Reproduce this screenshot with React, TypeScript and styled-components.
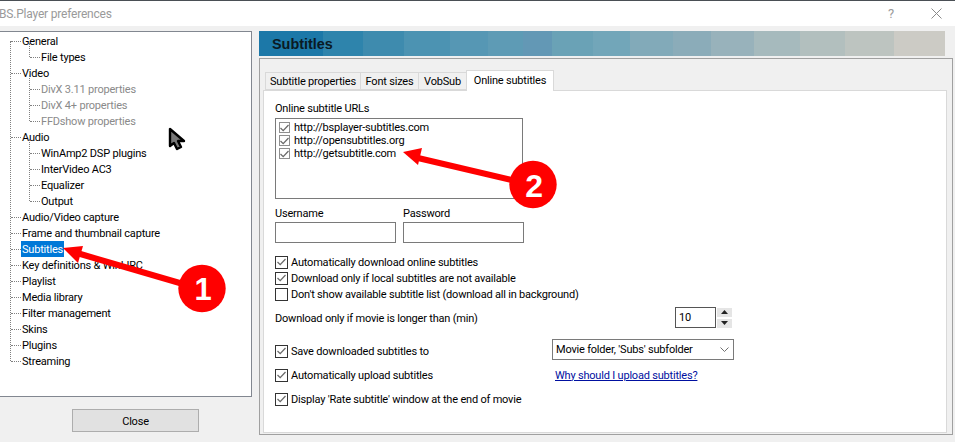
import styled, { createGlobalStyle } from "styled-components";

const GlobalStyle = createGlobalStyle`
  html, body {
    margin: 0;
    padding: 0;
    background: #f0f0f0;
  }
  body {
    font-family: Roboto, "Liberation Sans", Arial, sans-serif;
    font-size: 11px;
    letter-spacing: -0.2px;
    color: #000;
  }
`;

type TreeNode = { label: string; disabled?: boolean; selected?: boolean; children?: TreeNode[] };

const treeData: TreeNode[] = [
  { label: "General", children: [{ label: "File types" }] },
  {
    label: "Video",
    children: [
      { label: "DivX 3.11 properties", disabled: true },
      { label: "DivX 4+ properties", disabled: true },
      { label: "FFDshow properties", disabled: true },
    ],
  },
  {
    label: "Audio",
    children: [
      { label: "WinAmp2 DSP plugins" },
      { label: "InterVideo AC3" },
      { label: "Equalizer" },
      { label: "Output" },
    ],
  },
  { label: "Audio/Video capture" },
  { label: "Frame and thumbnail capture" },
  { label: "Subtitles", selected: true },
  { label: "Key definitions & WinLIRC" },
  { label: "Playlist" },
  { label: "Media library" },
  { label: "Filter management" },
  { label: "Skins" },
  { label: "Plugins" },
  { label: "Streaming" },
];

const Page = styled.div`
  position: relative;
  width: 955px;
  height: 442px;
  overflow: hidden;
  border-top: 1px solid #4a4f55;
  box-sizing: border-box;
  background: #f0f0f0;
`;

const TitleBar = styled.div`
  height: 25px;
  background: #fff;
  display: flex;
  align-items: center;
  color: #9a9a9a;
  font-size: 12px;
`;

const TitleText = styled.span`
  flex: 1;
  margin-left: -1px;
`;

const TitleIcon = styled.span<{ $gap: number }>`
  width: 20px;
  display: flex;
  justify-content: center;
  color: #9a9a9a;
  font-size: 13px;
  margin-right: ${(p) => p.$gap}px;
`;

const Body = styled.div`
  display: flex;
  height: 416px;
  padding-top: 5px;
  box-sizing: border-box;
`;

const LeftColumn = styled.div`
  width: 252px;
  display: flex;
  flex-direction: column;
`;

const TreePanel = styled.div`
  width: 252px;
  height: 366px;
  box-sizing: border-box;
  background: #fff;
  border: 1px solid #828790;
  border-left: none;
  padding: 1px 0 0 10px;
`;

const TreeList = styled.ul<{ $nested?: boolean }>`
  list-style: none;
  margin: 0;
  padding: 0;
  position: relative;
  margin-left: ${(p) => (p.$nested ? "19px" : "0")};
  &::before {
    content: "";
    position: absolute;
    left: 0;
    top: ${(p) => (p.$nested ? "-6px" : "8px")};
    bottom: 8px;
    border-left: 1px dotted #808080;
  }
`;

const TreeRow = styled.div`
  height: 16px;
  display: flex;
  align-items: center;
`;

const TreeDash = styled.span`
  width: 10px;
  margin-left: 1px;
  border-top: 1px dotted #808080;
`;

const TreeLabel = styled.span<{ $disabled?: boolean; $selected?: boolean }>`
  padding: 0 1px;
  height: 16px;
  line-height: 18px;
  white-space: nowrap;
  color: ${(p) => (p.$selected ? "#fff" : p.$disabled ? "#8a8a8a" : "#000")};
  background: ${(p) => (p.$selected ? "#0078d7" : "transparent")};
`;

const CloseButton = styled.button`
  width: 127px;
  height: 23px;
  margin: 12px 0 0 72px;
  background: #e1e1e1;
  border: 1px solid #adadad;
  font: inherit;
  letter-spacing: inherit;
  color: #000;
  padding: 2px 0 0;
`;

const RightColumn = styled.div`
  margin-left: 7px;
  width: 694px;
  display: flex;
  flex-direction: column;
`;

const Banner = styled.div`
  width: 686px;
  height: 25px;
  box-sizing: border-box;
  padding-left: 13px;
  display: flex;
  align-items: center;
  font-family: "Liberation Sans", Arial, sans-serif;
  font-size: 14.4px;
  letter-spacing: 0;
  font-weight: 700;
  color: #0a1a24;
  background: linear-gradient(
    to right,
    #1c78a8 0 64px,
    #2e84ac 64px 104px,
    #3e8bae 104px 145px,
    #4c93b2 145px 191px,
    #5697b4 191px 229px,
    #5e9bb5 229px 264px,
    #6398b5 264px 293px,
    #6aa2b6 293px 334px,
    #72a6b9 334px 371px,
    #82aab9 371px 414px,
    #8bacb9 414px 452px,
    #98b2bb 452px 495px,
    #a6babd 495px 541px,
    #b2bfbe 541px 586px,
    #bdc4c0 586px 635px,
    #cccbc5 635px 686px
  );
`;

const SettingsFrame = styled.div`
  margin-top: 2px;
  width: 694px;
  height: 377px;
  box-sizing: border-box;
  border: 1px solid #a0a0a0;
  padding: 13px 5px 1px 3px;
  display: flex;
  flex-direction: column;
`;

const TabStrip = styled.div`
  display: flex;
  align-items: flex-end;
  height: 18px;
  padding-left: 3px;
  position: relative;
  z-index: 1;
`;

const Tab = styled.div<{ $active?: boolean; $width: number }>`
  box-sizing: border-box;
  width: ${(p) => p.$width}px;
  height: ${(p) => (p.$active ? "21px" : "18px")};
  padding-top: 1px;
  padding-bottom: ${(p) => (p.$active ? "3px" : "0")};
  margin-bottom: ${(p) => (p.$active ? "-1px" : "0")};
  display: flex;
  align-items: center;
  justify-content: center;
  background: ${(p) => (p.$active ? "#fff" : "#f0f0f0")};
  border: 1px solid #d9d9d9;
  border-bottom: ${(p) => (p.$active ? "none" : "1px solid #d9d9d9")};
  margin-left: -1px;
  white-space: nowrap;
`;

const TabPage = styled.div`
  flex: 1;
  background: #fff;
  border: 1px solid #d9d9d9;
  padding: 10px 0 0 11px;
`;

const FieldLabel = styled.div`
  height: 14px;
  line-height: 16px;
  white-space: nowrap;
`;

const UrlBox = styled.div`
  width: 248px;
  height: 81px;
  margin-top: 3px;
  box-sizing: border-box;
  border: 1px solid #7a7a7a;
  padding: 2px 0 0 3px;
`;

const UrlRow = styled.div`
  display: flex;
  align-items: center;
  gap: 4px;
  height: 13px;
  white-space: nowrap;
`;

const BoxMark = styled.span<{ $size: number; $muted?: boolean }>`
  width: ${(p) => p.$size}px;
  height: ${(p) => p.$size}px;
  box-sizing: border-box;
  flex: none;
  border: 1px solid ${(p) => (p.$muted ? "#8f8f8f" : "#333")};
  background: #fff;
  display: flex;
  align-items: center;
  justify-content: center;
`;

const Credentials = styled.div`
  display: flex;
  gap: 7px;
  margin-top: 7px;
`;

const CredentialField = styled.div`
  width: 121px;
`;

const TextBox = styled.div`
  width: 121px;
  height: 21px;
  margin-top: 2px;
  box-sizing: border-box;
  border: 1px solid #7a7a7a;
`;

const CheckGroup = styled.div`
  margin-top: 11px;
`;

const CheckRow = styled.div`
  display: flex;
  align-items: center;
  gap: 3px;
  height: 16px;
  white-space: nowrap;
`;

const CheckText = styled.span`
  padding-top: 1px;
`;

const SpinRow = styled.div`
  display: flex;
  align-items: center;
  height: 21px;
  margin-top: 5px;
`;

const SpinLabel = styled(FieldLabel)`
  width: 400px;
`;

const SpinInput = styled.div`
  width: 41px;
  height: 21px;
  box-sizing: border-box;
  border: 1px solid #555;
  padding: 0 3px;
  line-height: 20px;
`;

const SpinButtons = styled.div`
  margin-left: 1px;
  width: 15px;
  height: 20px;
  display: flex;
  flex-direction: column;
  gap: 2px;
`;

const SpinButton = styled.div`
  flex: 1;
  background: #e5e5e5;
  display: flex;
  align-items: center;
  justify-content: center;
`;

const OptionGrid = styled.div`
  display: grid;
  grid-template-columns: 277px auto;
  grid-auto-rows: 24px;
  align-items: center;
  margin-top: 11px;
  justify-content: start;
`;

const Select = styled.div`
  width: 182px;
  height: 21px;
  box-sizing: border-box;
  border: 1px solid #7a7a7a;
  padding: 0 4px 0 3px;
  display: flex;
  align-items: center;
  justify-content: space-between;
  white-space: nowrap;
  margin-bottom: 3px;
`;

const HelpLink = styled.a`
  color: #000fa0;
  text-decoration: underline;
  white-space: nowrap;
  margin-left: 3px;
`;

const Annotations = styled.svg`
  position: absolute;
  left: 0;
  top: -1px;
  pointer-events: none;
`;

const Check = () => (
  <svg width="9" height="8" viewBox="0 0 9 8">
    <path d="M0.5 4 L3.2 6.6 L8.5 1" fill="none" stroke="#6a6a6a" strokeWidth="1.3" />
  </svg>
);

const CheckOption = ({ label, checked = true }: { label: string; checked?: boolean }) => (
  <CheckRow>
    <BoxMark $size={13}>{checked && <Check />}</BoxMark>
    <CheckText>{label}</CheckText>
  </CheckRow>
);

const TreeBranch = ({ nodes, nested }: { nodes: TreeNode[]; nested?: boolean }) => (
  <TreeList $nested={nested}>
    {nodes.map((node) => (
      <li key={node.label}>
        <TreeRow>
          <TreeDash />
          <TreeLabel $disabled={node.disabled} $selected={node.selected}>
            {node.label}
          </TreeLabel>
        </TreeRow>
        {node.children && <TreeBranch nodes={node.children} nested />}
      </li>
    ))}
  </TreeList>
);

const urls = ["http://bsplayer-subtitles.com", "http://opensubtitles.org", "http://getsubtitle.com"];

export default function App() {
  return (
    <Page>
      <GlobalStyle />
      <TitleBar>
        <TitleText>BS.Player preferences</TitleText>
        <TitleIcon $gap={25}>?</TitleIcon>
        <TitleIcon $gap={9}>
          <svg width="11" height="11" viewBox="0 0 11 11">
            <path d="M0.5 0.5 L10.5 10.5 M10.5 0.5 L0.5 10.5" stroke="#8a8a8a" strokeWidth="1" />
          </svg>
        </TitleIcon>
      </TitleBar>
      <Body>
        <LeftColumn>
          <TreePanel>
            <TreeBranch nodes={treeData} />
          </TreePanel>
          <CloseButton>Close</CloseButton>
        </LeftColumn>
        <RightColumn>
          <Banner>Subtitles</Banner>
          <SettingsFrame>
            <TabStrip>
              <Tab $width={96}>Subtitle properties</Tab>
              <Tab $width={59}>Font sizes</Tab>
              <Tab $width={49}>VobSub</Tab>
              <Tab $active $width={88}>
                Online subtitles
              </Tab>
            </TabStrip>
            <TabPage>
              <FieldLabel>Online subtitle URLs</FieldLabel>
              <UrlBox>
                {urls.map((url) => (
                  <UrlRow key={url}>
                    <BoxMark $size={11} $muted>
                      <Check />
                    </BoxMark>
                    {url}
                  </UrlRow>
                ))}
              </UrlBox>
              <Credentials>
                <CredentialField>
                  <FieldLabel>Username</FieldLabel>
                  <TextBox />
                </CredentialField>
                <CredentialField>
                  <FieldLabel>Password</FieldLabel>
                  <TextBox />
                </CredentialField>
              </Credentials>
              <CheckGroup>
                <CheckOption label="Automatically download online subtitles" />
                <CheckOption label="Download only if local subtitles are not available" />
                <CheckOption label="Don't show available subtitle list (download all in background)" checked={false} />
              </CheckGroup>
              <SpinRow>
                <SpinLabel>Download only if movie is longer than (min)</SpinLabel>
                <SpinInput>10</SpinInput>
                <SpinButtons>
                  <SpinButton>
                    <svg width="7" height="4" viewBox="0 0 7 4">
                      <path d="M3.5 0 L7 4 L0 4 Z" fill="#222" />
                    </svg>
                  </SpinButton>
                  <SpinButton>
                    <svg width="7" height="4" viewBox="0 0 7 4">
                      <path d="M0 0 L7 0 L3.5 4 Z" fill="#222" />
                    </svg>
                  </SpinButton>
                </SpinButtons>
              </SpinRow>
              <OptionGrid>
                <CheckOption label="Save downloaded subtitles to" />
                <Select>
                  Movie folder, 'Subs' subfolder
                  <svg width="9" height="5" viewBox="0 0 9 5">
                    <path d="M0.5 0.5 L4.5 4.5 L8.5 0.5" fill="none" stroke="#707070" strokeWidth="1" />
                  </svg>
                </Select>
                <CheckOption label="Automatically upload subtitles" />
                <HelpLink>Why should I upload subtitles?</HelpLink>
                <CheckOption label="Display 'Rate subtitle' window at the end of movie" />
              </OptionGrid>
            </TabPage>
          </SettingsFrame>
        </RightColumn>
      </Body>
      <Annotations width="955" height="442" viewBox="0 0 955 442">
        <path
          d="M170 129 L170 146 L174 143 L177 149 L181 147 L178 141 L184 141 Z"
          fill="#777"
          stroke="#000"
          strokeWidth="2.4"
          strokeLinejoin="round"
        />
        <path d="M77 253 L190 286" stroke="#ff0000" strokeWidth="6" />
        <path d="M63 248 L83 246 L78 263 Z" fill="#ff0000" />
        <circle cx="202" cy="288.5" r="23.7" fill="#ff0000" />
        <text x="203" y="300" textAnchor="middle" fontFamily="Liberation Sans, Arial, sans-serif" fontWeight="700" fontSize="31" fill="#fff">
          1
        </text>
        <path d="M418 158 L520 182" stroke="#ff0000" strokeWidth="6" />
        <path d="M403 152 L422 148 L418 165 Z" fill="#ff0000" />
        <circle cx="533" cy="184.5" r="23.7" fill="#ff0000" />
        <text x="534" y="197" textAnchor="middle" fontFamily="Liberation Sans, Arial, sans-serif" fontWeight="700" fontSize="32" fill="#fff">
          2
        </text>
      </Annotations>
    </Page>
  );
}
